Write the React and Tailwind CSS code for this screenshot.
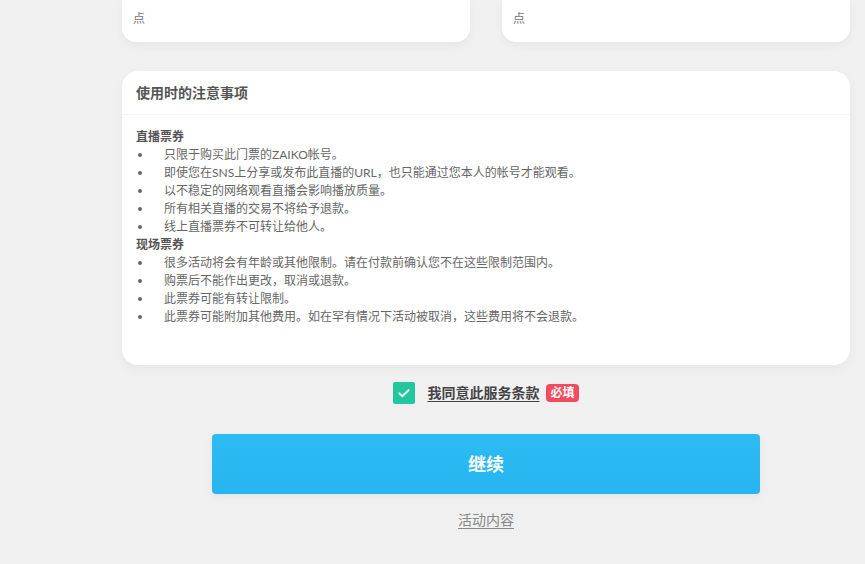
import React from "react";

const liveNotes = [
  "只限于购买此门票的ZAIKO帐号。",
  "即使您在SNS上分享或发布此直播的URL，也只能通过您本人的帐号才能观看。",
  "以不稳定的网络观看直播会影响播放质量。",
  "所有相关直播的交易不将给予退款。",
  "线上直播票券不可转让给他人。",
];

const venueNotes = [
  "很多活动将会有年龄或其他限制。请在付款前确认您不在这些限制范围内。",
  "购票后不能作出更改，取消或退款。",
  "此票券可能有转让限制。",
  "此票券可能附加其他费用。如在罕有情况下活动被取消，这些费用将不会退款。",
];

const NoteList = ({ items }) => (
  <ul>
    {items.map((text) => (
      <li key={text} className="flex items-center h-[18px]">
        <span className="w-[4px] h-[4px] rounded-full bg-[#666] ml-[2px] mr-[22px]" />
        <span>{text}</span>
      </li>
    ))}
  </ul>
);

export default function App() {
  return (
    <div
      className="min-h-screen bg-[#f0f0f0] overflow-hidden"
      style={{ fontFamily: "Lato, 'Noto Sans CJK SC', sans-serif" }}
    >
      <div className="w-[728px] ml-[122px]">
        {/* top inputs (cut off) */}
        <div className="flex gap-[32px]">
          <div className="flex-1 h-[42px] bg-white rounded-b-[14px] shadow-[0_4px_10px_rgba(0,0,0,0.04)] px-[11px] pt-[11px] text-[12px] leading-[16px] text-[#777]">
            点
          </div>
          <div className="flex-1 h-[42px] bg-white rounded-b-[14px] shadow-[0_4px_10px_rgba(0,0,0,0.04)] px-[11px] pt-[11px] text-[12px] leading-[16px] text-[#777]">
            点
          </div>
        </div>

        {/* notes card */}
        <div className="mt-[29px] bg-white rounded-[16px] shadow-[0_4px_12px_rgba(0,0,0,0.04)]">
          <div className="h-[44px] px-[14px] flex items-center border-b border-[#f5f5f5] text-[14px] font-bold text-[#555]">
            使用时的注意事项
          </div>
          <div className="px-[14px] pt-[13px] pb-[39px] text-[12px] leading-[18px] text-[#666]">
            <div className="font-bold text-[#555]">直播票券</div>
            <NoteList items={liveNotes} />
            <div className="font-bold text-[#555]">现场票券</div>
            <NoteList items={venueNotes} />
          </div>
        </div>

        {/* agree */}
        <div className="mt-[17px] flex items-center justify-center">
          <div className="w-[22px] h-[22px] rounded-[2px] bg-[#22c79d] flex items-center justify-center">
            <svg width="14" height="14" viewBox="0 0 24 24" fill="none" stroke="white" strokeWidth="3.2" strokeLinecap="round" strokeLinejoin="round">
              <path d="M4 12.5l5 5L20 7" />
            </svg>
          </div>
          <span className="ml-[12px] text-[14px] leading-[20px] font-bold text-[#444] underline underline-offset-[3px]">
            我同意此服务条款
          </span>
          <span className="ml-[7px] h-[18px] px-[4px] rounded-[4px] bg-[#f04b5e] text-white text-[12px] font-bold leading-[18px]">
            必填
          </span>
        </div>

        {/* continue */}
        <div className="mt-[30px] flex justify-center">
          <button className="w-[548px] h-[60px] rounded-[4px] bg-gradient-to-b from-[#2dbbf3] to-[#25b5f0] text-white text-[18px] font-bold shadow-[0_3px_8px_rgba(0,0,0,0.05)]">
            继续
          </button>
        </div>

        <div className="mt-[13px] text-center">
          <span className="text-[14px] leading-[20px] text-[#888] underline underline-offset-[3px]">
            活动内容
          </span>
        </div>
      </div>
    </div>
  );
}
